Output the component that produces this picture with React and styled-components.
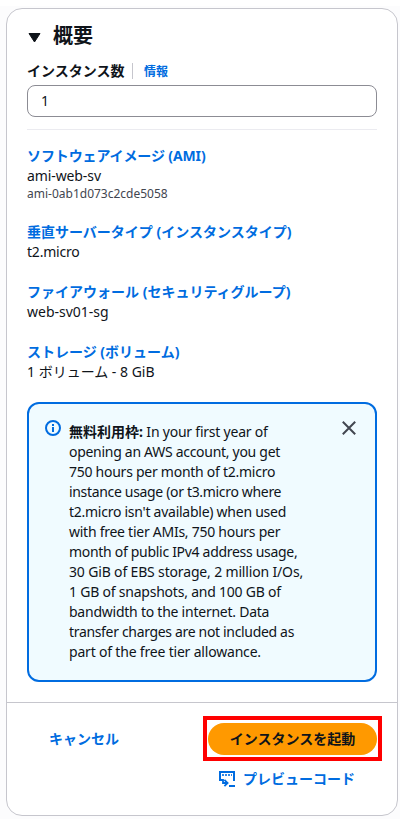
import styled, { createGlobalStyle } from 'styled-components';

const GlobalStyle = createGlobalStyle`
    * {
        box-sizing: border-box;
    }
    body {
        margin: 0;
        background: #fff;
        color: #0f141a;
        font-family: "Noto Sans", "Noto Sans CJK JP", sans-serif;
        font-size: 14px;
        line-height: 20px;
    }
`

const Page = styled.div`
    width: 400px;
    height: 819px;
    border-top: 6px solid #fff;
    background: #fcfcfd;
    padding: 2px 2px 3px 6px;
`

const Card = styled.section`
    height: 808px;
    display: flex;
    flex-direction: column;
    background: #fff;
    border: 1px solid #c6c6cd;
    border-radius: 16px;
`

const Body = styled.div`
    padding: 12px 20px 20px;
    border-bottom: 1px solid #c6c6cd;
`

const Header = styled.div`
    height: 30px;
    display: flex;
    align-items: center;
    gap: 12px;
    padding-left: 1px;
    svg {
        margin-top: 3px;
    }
`

const Title = styled.h2`
    margin: 0;
    font-size: 20px;
    line-height: 30px;
    font-weight: bold;
`

const LabelRow = styled.div`
    height: 20px;
    margin-top: 10px;
    display: flex;
    align-items: center;
`

const Label = styled.label`
    font-weight: bold;
    width: 105px;
    white-space: nowrap;
`

const InfoLink = styled.a`
    height: 16px;
    border-left: 1px solid #c6c6cd;
    padding-left: 11px;
    color: #006ce0;
    font-size: 12px;
    font-weight: bold;
    line-height: 18px;
`

const Input = styled.input`
    display: block;
    width: 350px;
    height: 32px;
    margin-top: 4px;
    padding: 0 13px 1px;
    border: 1px solid #8c8c94;
    border-radius: 8px;
    background: #fff;
    color: #0f141a;
    font: inherit;
    outline: none;
`

const Divider = styled.hr`
    height: 1px;
    margin: 12px 0 16px;
    border: 0;
    background: #ebebf0;
`

const Items = styled.div`
    display: flex;
    flex-direction: column;
    gap: 20px;
`

const Item = styled.div`
    white-space: nowrap;
`

const ItemLink = styled.a`
    display: block;
    color: #006ce0;
    font-weight: bold;
    letter-spacing: ${({$spacing}) => $spacing || 0}px;
`

const Value = styled.div`
    letter-spacing: ${({$spacing}) => $spacing || 0}px;
`

const SubValue = styled.div`
    color: #424650;
    font-size: 12px;
    line-height: 16px;
`

const Alert = styled.div`
    width: 350px;
    height: 280px;
    margin-top: 20px;
    display: flex;
    align-items: flex-start;
    padding: 16px 18px 0 16px;
    border: 2px solid #006ce0;
    border-radius: 12px;
    background: #f0fbff;
    svg {
        flex: none;
    }
`

const AlertText = styled.div`
    width: 264px;
    margin: 2px 10px 0 8px;
`

const Line = styled.div`
    white-space: nowrap;
    letter-spacing: ${({$spacing}) => $spacing || 0}px;
    b {
        letter-spacing: 0;
    }
`

const Footer = styled.div`
    display: grid;
    grid-template-columns: 154px 179px;
    padding: 13px 15px 0 42px;
`

const Cancel = styled.a`
    align-self: center;
    color: #006ce0;
    font-weight: bold;
`

const Highlight = styled.div`
    height: 45px;
    padding: 3px 1px 2px;
    border: 4px solid #f00;
`

const LaunchButton = styled.button`
    display: block;
    width: 169px;
    height: 32px;
    padding: 0;
    border: 0;
    border-radius: 16px;
    background: #ff9900;
    color: #0f141a;
    font: inherit;
    font-weight: bold;
`

const Preview = styled.a`
    grid-column: 2;
    display: flex;
    align-items: center;
    gap: 8px;
    margin-top: 8px;
    padding-left: 16px;
    color: #006ce0;
    font-weight: bold;
    white-space: nowrap;
`

const Caret = () => (
    <svg width="13" height="12" viewBox="0 0 13 12">
        <path d="M1 1.5h11L6.5 10z" fill="#0f141a" stroke="#0f141a" strokeLinejoin="round" />
    </svg>
)

const InfoIcon = () => (
    <svg width="16" height="16" viewBox="0 0 16 16" fill="none" stroke="#006ce0" strokeWidth="2">
        <circle cx="8" cy="8" r="7" />
        <path d="M8 12V7M8 6V4" />
    </svg>
)

const CloseIcon = () => (
    <svg width="16" height="16" viewBox="0 0 16 16" fill="none" stroke="#424650" strokeWidth="2">
        <path d="M1.8 1.8l12.4 12.4M14.2 1.8L1.8 14.2" />
    </svg>
)

const CodeIcon = () => (
    <svg width="16" height="16" viewBox="0 0 16 16" fill="none" stroke="#006ce0" strokeWidth="2">
        <path d="M4 9H1V1h14v9" />
        <path d="M3.2 4h1.6M6.2 4h1.6M9.2 4h1.6M12.2 4h.8" />
        <path d="M4 8v4h4M5.4 8.8L8.6 12l-3.2 3.2" strokeWidth="1.8" />
        <path d="M10 15h6" />
    </svg>
)

const items = [
    {link: 'ソフトウェアイメージ (AMI)', value: 'ami-web-sv', sub: 'ami-0ab1d073c2cde5058', linkSpacing: -0.12, spacing: -0.1},
    {link: '垂直サーバータイプ (インスタンスタイプ)', value: 't2.micro', spacing: -0.2},
    {link: 'ファイアウォール (セキュリティグループ)', value: 'web-sv01-sg'},
    {link: 'ストレージ (ボリューム)', value: '1 ボリューム - 8 GiB'},
]

const lines = [
    {text: 'opening an AWS account, you get', spacing: -0.29},
    {text: '750 hours per month of t2.micro', spacing: -0.26},
    {text: 'instance usage (or t3.micro where', spacing: -0.33},
    {text: "t2.micro isn't available) when used", spacing: -0.26},
    {text: 'with free tier AMIs, 750 hours per', spacing: -0.26},
    {text: 'month of public IPv4 address usage,', spacing: -0.3},
    {text: '30 GiB of EBS storage, 2 million I/Os,', spacing: -0.16},
    {text: '1 GB of snapshots, and 100 GB of', spacing: -0.22},
    {text: 'bandwidth to the internet. Data', spacing: -0.24},
    {text: 'transfer charges are not included as', spacing: -0.33},
    {text: 'part of the free tier allowance.', spacing: -0.19},
]

const App = () => (
    <>
        <GlobalStyle />
        <Page>
            <Card>
                <Body>
                    <Header>
                        <Caret />
                        <Title>概要</Title>
                    </Header>
                    <LabelRow>
                        <Label htmlFor="count">インスタンス数</Label>
                        <InfoLink>情報</InfoLink>
                    </LabelRow>
                    <Input id="count" defaultValue="1" />
                    <Divider />
                    <Items>
                        {items.map(({link, value, sub, linkSpacing, spacing}) => (
                            <Item key={link}>
                                <ItemLink $spacing={linkSpacing}>{link}</ItemLink>
                                <Value $spacing={spacing}>{value}</Value>
                                {!!sub && <SubValue>{sub}</SubValue>}
                            </Item>
                        ))}
                    </Items>
                    <Alert>
                        <InfoIcon />
                        <AlertText>
                            <Line $spacing={-0.22}><b>無料利用枠:</b> In your first year of</Line>
                            {lines.map(({text, spacing}) => (
                                <Line key={text} $spacing={spacing}>{text}</Line>
                            ))}
                        </AlertText>
                        <CloseIcon />
                    </Alert>
                </Body>
                <Footer>
                    <Cancel>キャンセル</Cancel>
                    <Highlight>
                        <LaunchButton>インスタンスを起動</LaunchButton>
                    </Highlight>
                    <Preview>
                        <CodeIcon />
                        プレビューコード
                    </Preview>
                </Footer>
            </Card>
        </Page>
    </>
)

export default App;
